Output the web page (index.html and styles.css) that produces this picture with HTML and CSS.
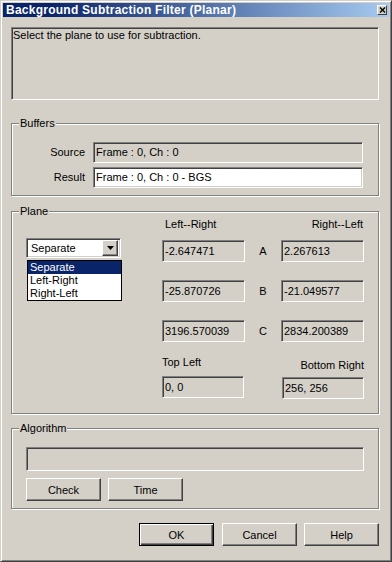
FILE: index.html
```html
<!DOCTYPE html>
<html lang="en">
<head>
    <meta charset="UTF-8">
    <meta name="viewport" content="width=device-width, initial-scale=1.0">
    <title>Background Subtraction Filter (Planar)</title>
    <link rel="stylesheet" href="styles.css">
</head>
<body>

    <div class="window">
        <!-- Caption bar -->
        <div class="titlebar">
            <span class="title">Background Subtraction Filter (Planar)</span>
            <span class="close-box">
                <svg width="7" height="6" viewBox="0 0 7 6"><path d="M1 0.5 L6 5.5 M6 0.5 L1 5.5" stroke="#000" stroke-width="1.4" fill="none"/></svg>
            </span>
        </div>

        <div class="dialog">
            <div class="message sunken">Select the plane to use for subtraction.</div>

            <!-- Buffers -->
            <div class="group buffers">
                <span class="group-label">Buffers</span>
                <div class="buffer-row">
                    <span class="row-label">Source</span>
                    <div class="field sunken readonly">Frame : 0, Ch : 0</div>
                </div>
                <div class="buffer-row">
                    <span class="row-label">Result</span>
                    <div class="field sunken">Frame : 0, Ch : 0 - BGS</div>
                </div>
            </div>

            <!-- Plane -->
            <div class="group plane">
                <span class="group-label">Plane</span>
                <div class="plane-body">
                    <div class="combo-col">
                        <div class="combo sunken">
                            <span class="combo-text">Separate</span>
                            <span class="combo-btn">
                                <svg width="7" height="4" viewBox="0 0 7 4"><path d="M0 0 H7 L3.5 4 Z" fill="#000"/></svg>
                            </span>
                            <!-- open dropdown list -->
                            <ul class="combo-list">
                                <li class="selected">Separate</li>
                                <li>Left-Right</li>
                                <li>Right-Left</li>
                            </ul>
                        </div>
                    </div>

                    <div class="coeffs">
                        <div class="coeff-head">
                            <span class="head-left">Left--Right</span>
                            <span>Right--Left</span>
                        </div>
                        <div class="coeff-row first">
                            <div class="field sunken readonly num">-2.647471</div>
                            <span class="coeff-name">A</span>
                            <div class="field sunken readonly num">2.267613</div>
                        </div>
                        <div class="coeff-row">
                            <div class="field sunken readonly num">-25.870726</div>
                            <span class="coeff-name">B</span>
                            <div class="field sunken readonly num">-21.049577</div>
                        </div>
                        <div class="coeff-row">
                            <div class="field sunken readonly num">3196.570039</div>
                            <span class="coeff-name">C</span>
                            <div class="field sunken readonly num">2834.200389</div>
                        </div>
                        <div class="corners">
                            <div class="corner">
                                <span class="corner-label">Top Left</span>
                                <div class="field sunken readonly num corner-field">0, 0</div>
                            </div>
                            <div class="corner right">
                                <span class="corner-label">Bottom Right</span>
                                <div class="field sunken readonly num corner-field">256, 256</div>
                            </div>
                        </div>
                    </div>
                </div>
            </div>

            <!-- Algorithm -->
            <div class="group algorithm">
                <span class="group-label">Algorithm</span>
                <div class="field sunken readonly algo-field"></div>
                <div class="algo-buttons">
                    <button class="btn">Check</button>
                    <button class="btn">Time</button>
                </div>
            </div>

            <div class="actions">
                <button class="btn default">OK</button>
                <button class="btn">Cancel</button>
                <button class="btn">Help</button>
            </div>
        </div>
    </div>

</body>
</html>
```

FILE: styles.css
```css
* {
    box-sizing: border-box;
}

body {
    margin: 0;
    background-color: #d4d0c8;
    font-family: "Liberation Sans", Arial, sans-serif;
    font-size: 11px;
    line-height: 13px;
    color: #000;
}

/* Window frame */
.window {
    width: 392px;
    height: 562px;
    display: flex;
    flex-direction: column;
    background-color: #d4d0c8;
    border: 1px solid;
    border-color: #d4d0c8 #404040 #404040 #d4d0c8;
    box-shadow: inset 1px 1px #fff, inset -1px -1px #808080;
    padding: 2px;
}

/* Caption */
.titlebar {
    height: 14px;
    display: flex;
    align-items: center;
    justify-content: space-between;
    padding: 0 2px 0 3px;
    background: linear-gradient(to right, #0a246a 12%, #a6caf0);
    color: #fff;
    font-size: 12px;
    font-weight: bold;
    letter-spacing: 0.25px;
}

.close-box {
    width: 10px;
    height: 10px;
    display: flex;
    align-items: center;
    justify-content: center;
    background-color: #d4d0c8;
    border: 1px solid;
    border-color: #fff #404040 #404040 #fff;
}

.dialog {
    padding: 10px 10px 0 8px;
    display: flex;
    flex-direction: column;
}

/* 3D borders */
.sunken {
    border: 1px solid;
    border-color: #808080 #fff #fff #808080;
    box-shadow: inset 1px 1px #404040, inset -1px -1px #d4d0c8;
}

.message {
    height: 73px;
    padding: 1px 0 0 1px;
}

/* Group boxes */
.group {
    position: relative;
    border: 1px solid #808080;
    box-shadow: inset 1px 1px #fff, 1px 1px #fff;
}

.group-label {
    position: absolute;
    top: -7px;
    left: 7px;
    padding: 0 1px;
    background-color: #d4d0c8;
}

.field {
    display: flex;
    align-items: center;
    padding-left: 2px;
    background-color: #fff;
    white-space: nowrap;
}

.field.readonly {
    background-color: #d4d0c8;
}

/* Buffers */
.buffers {
    margin-top: 23px;
    padding: 18px 0 7px 0;
}

.buffer-row {
    display: flex;
    align-items: center;
}

.buffer-row + .buffer-row {
    margin-top: 4px;
}

.row-label {
    width: 73px;
    margin-right: 8px;
    text-align: right;
}

.buffer-row .field {
    width: 270px;
    height: 21px;
}

/* Plane */
.plane {
    margin-top: 15px;
    padding: 6px 0 14px 14px;
}

.plane-body {
    display: flex;
}

.combo-col {
    width: 136px;
    padding-top: 20px;
}

.combo {
    position: relative;
    width: 95px;
    height: 20px;
    display: flex;
    align-items: center;
    justify-content: space-between;
    padding: 2px 2px 2px 4px;
    background-color: #fff;
}

.combo-btn {
    width: 16px;
    height: 16px;
    display: flex;
    align-items: center;
    justify-content: center;
    border: 1px solid;
    border-color: #fff #404040 #404040 #fff;
    box-shadow: inset -1px -1px #808080;
    background-color: #d4d0c8;
}

.combo-list {
    position: absolute;
    top: 21px;
    left: 0;
    width: 95px;
    margin: 0;
    padding: 0;
    list-style: none;
    background-color: #fff;
    border: 1px solid #000;
    z-index: 5;
}

.combo-list li {
    height: 13px;
    padding-left: 2px;
}

.combo-list li.selected {
    background-color: #0a246a;
    color: #fff;
}

.coeffs {
    width: 202px;
}

.coeff-head {
    display: flex;
    justify-content: space-between;
    padding-right: 1px;
}

.head-left {
    padding-left: 3px;
}

.coeff-row {
    display: flex;
    align-items: center;
    margin-top: 18px;
}

.coeff-row.first {
    margin-top: 9px;
}

.coeff-row .field {
    width: 83px;
    height: 22px;
}

.coeff-name {
    width: 36px;
    text-align: center;
}

.num {
    padding-left: 2px;
}

.corners {
    display: flex;
    justify-content: space-between;
    margin-top: 14px;
}

.corner {
    display: flex;
    flex-direction: column;
}

.corner.right {
    align-items: flex-end;
}

.corner-label {
    margin-bottom: 7px;
}

.corner.right .corner-label {
    margin-top: 3px;
    margin-bottom: 5px;
}

.corner-field {
    width: 82px;
    height: 22px;
}

/* Algorithm */
.algorithm {
    margin-top: 14px;
    padding: 18px 0 7px 14px;
}

.algo-field {
    width: 338px;
    height: 24px;
}

.algo-buttons {
    display: flex;
    gap: 7px;
    margin-top: 7px;
}

/* Push buttons */
.btn {
    width: 75px;
    height: 23px;
    padding: 0;
    font-family: inherit;
    font-size: 11px;
    color: #000;
    background-color: #d4d0c8;
    border: 1px solid;
    border-color: #fff #404040 #404040 #fff;
    box-shadow: inset -1px -1px #808080;
}

.btn.default {
    border-color: #000;
    box-shadow: inset 1px 1px #fff, inset -1px -1px #404040, inset -2px -2px #808080;
}

.actions {
    display: flex;
    justify-content: flex-end;
    gap: 8px;
    margin-top: 14px;
}

.actions .btn + .btn + .btn {
    margin-left: -1px;
}
```
